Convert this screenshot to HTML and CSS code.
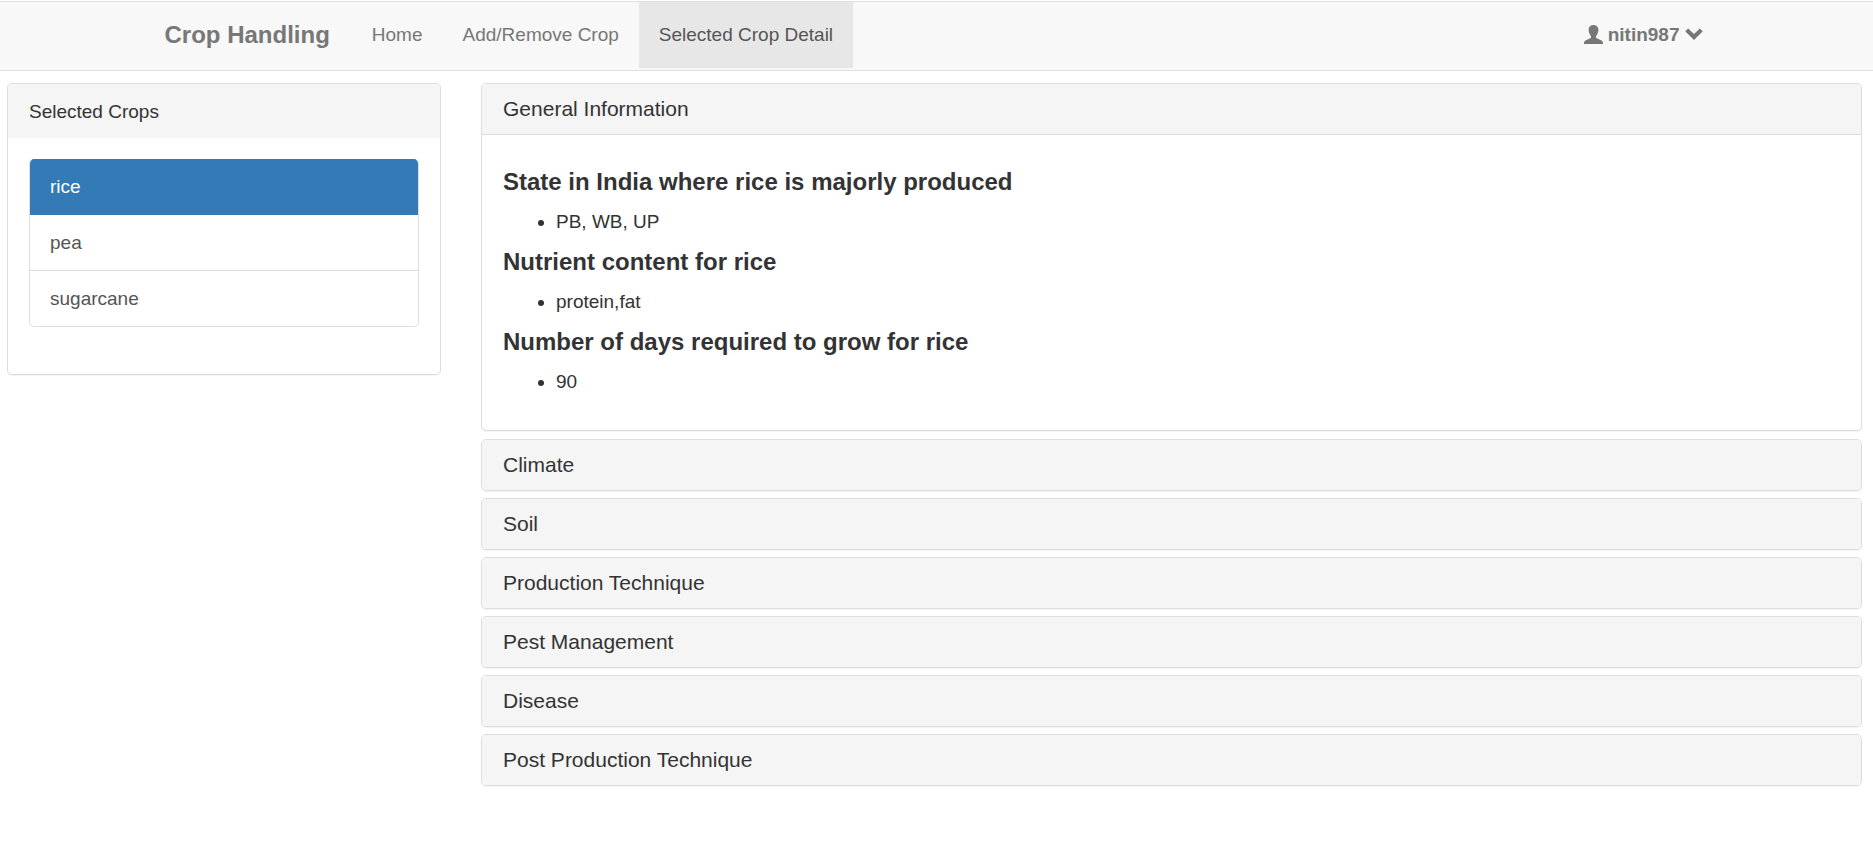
FILE: index.html
```html
<!DOCTYPE html>
<html lang="en">
<head>
<meta charset="utf-8">
<title>Crop Handling</title>
<link rel="stylesheet" href="styles.css">
</head>
<body>
<nav class="navbar">
  <div class="navbar-inner">
    <a class="brand" href="#">Crop Handling</a>
    <ul class="nav">
      <li><a class="nav-link" href="#">Home</a></li>
      <li><a class="nav-link" href="#">Add/Remove Crop</a></li>
      <li><a class="nav-link active" href="#" aria-current="page">Selected Crop Detail</a></li>
    </ul>
    <button class="user" type="button">
      <svg class="icon-user" viewBox="0 0 19 19" aria-hidden="true"><path d="M9.500 0C12.300 0 14.400 1.700 14.400 4.800C14.400 7.500 13.300 9.600 12.200 10.900C11.800 11.500 11.800 12.700 12.300 13.100L17.500 15.500C18.700 16.100 19 16.800 19 19H0C0 16.800.3 16.100 1.500 15.500L6.700 13.100C7.200 12.700 7.200 11.500 6.800 10.900C5.700 9.600 4.600 7.500 4.600 4.800C4.600 1.700 6.700 0 9.500 0Z"/></svg>
      <span>nitin987</span>
      <svg class="icon-chevron" viewBox="0 0 18 14" aria-hidden="true"><path d="M3.200.4L9 6.100L14.800.4L17.800 3.300L9 12L.2 3.300Z"/></svg>
    </button>
  </div>
</nav>
<main class="layout">
  <aside class="panel">
    <h2 class="panel-heading">Selected Crops</h2>
    <div class="panel-body">
      <div class="list-group">
        <button class="list-item selected" type="button">rice</button>
        <button class="list-item" type="button">pea</button>
        <button class="list-item" type="button">sugarcane</button>
      </div>
    </div>
  </aside>
  <section class="accordion">
    <article class="panel open">
      <h2><button class="toggle" type="button" aria-expanded="true">General Information</button></h2>
      <div class="panel-body details">
        <h3>State in India where rice is majorly produced</h3>
        <ul><li>PB, WB, UP</li></ul>
        <h3>Nutrient content for rice</h3>
        <ul><li>protein,fat</li></ul>
        <h3>Number of days required to grow for rice</h3>
        <ul><li>90</li></ul>
      </div>
    </article>
    <article class="panel"><h2><button class="toggle" type="button" aria-expanded="false">Climate</button></h2></article>
    <article class="panel"><h2><button class="toggle" type="button" aria-expanded="false">Soil</button></h2></article>
    <article class="panel"><h2><button class="toggle" type="button" aria-expanded="false">Production Technique</button></h2></article>
    <article class="panel"><h2><button class="toggle" type="button" aria-expanded="false">Pest Management</button></h2></article>
    <article class="panel"><h2><button class="toggle" type="button" aria-expanded="false">Disease</button></h2></article>
    <article class="panel"><h2><button class="toggle" type="button" aria-expanded="false">Post Production Technique</button></h2></article>
  </section>
</main>
</body>
</html>
```
FILE: styles.css
```css
* { box-sizing: border-box; }

body {
  margin: 0;
  padding-top: 1px;
  background: #fff;
  color: #333;
  font-family: "Liberation Sans", Arial, sans-serif;
  font-size: 19px;
  line-height: 27px;
}

button {
  margin: 0;
  border: 0;
  background: none;
  color: inherit;
  font: inherit;
  text-align: left;
  cursor: pointer;
}

h2, h3, ul { margin: 0; padding: 0; }
h2 { font-size: inherit; font-weight: 400; }

.navbar {
  margin-bottom: 12px;
  border: solid #e0e0e0;
  border-width: 1px 0;
  background: #f8f8f8;
}

.navbar-inner {
  display: flex;
  align-items: flex-start;
  max-width: 1560px;
  margin: 0 auto;
  padding: 0 14px 2px 8px;
}

.brand {
  padding: 19px 22px 20px 0;
  color: #777;
  font-size: 24px;
  font-weight: 700;
  text-decoration: none;
}

.nav { display: flex; list-style: none; }

.nav-link {
  display: block;
  padding: 19px 20px 20px;
  color: #777;
  text-decoration: none;
}

.nav-link.active { background: #e7e7e7; color: #555; }

.user {
  display: flex;
  align-items: center;
  gap: 5px;
  margin-left: auto;
  padding: 19px 0 20px;
  color: #777;
  font-weight: 700;
}

.user svg { fill: currentColor; }
.icon-user { width: 19px; height: 19px; }
.icon-chevron { width: 18px; height: 14px; }

.layout {
  display: grid;
  grid-template-columns: 22fr 70fr;
  align-items: start;
  gap: 40px;
  padding: 0 11px 20px 7px;
}

.panel {
  overflow: hidden;
  border: 1px solid #ddd;
  border-radius: 5px;
  background: #fff;
  box-shadow: 0 1px 1px rgba(0, 0, 0, .05);
}

.panel-heading { padding: 14px 21px 13px; background: #f5f5f5; }
.panel-body { padding: 21px; }

.list-group {
  overflow: hidden;
  margin-bottom: 26px;
  border: 1px solid #ddd;
  border-top: 0;
  border-radius: 5px;
}

.list-item {
  display: block;
  width: 100%;
  padding: 14px 20px;
  color: #555;
}

.list-item + .list-item { border-top: 1px solid #ddd; }

.list-item.selected {
  width: calc(100% + 2px);
  margin: 0 -1px;
  padding: 14px 21px 15px;
  background: #337ab7;
  color: #fff;
}

.list-item.selected + .list-item { border-top: 0; }

.accordion { display: grid; gap: 7px; }
.accordion .open { margin-bottom: 1px; }

.toggle {
  display: block;
  width: 100%;
  padding: 13px 21px;
  background: #f5f5f5;
  font-size: 21px;
  line-height: 24px;
}

.open .toggle { border-bottom: 1px solid #ddd; }

.details { padding-top: 34px; }
.details h3 { margin-bottom: 13px; font-size: 24px; line-height: 26px; }
.details ul { margin-bottom: 14px; padding-left: 53px; }
```
